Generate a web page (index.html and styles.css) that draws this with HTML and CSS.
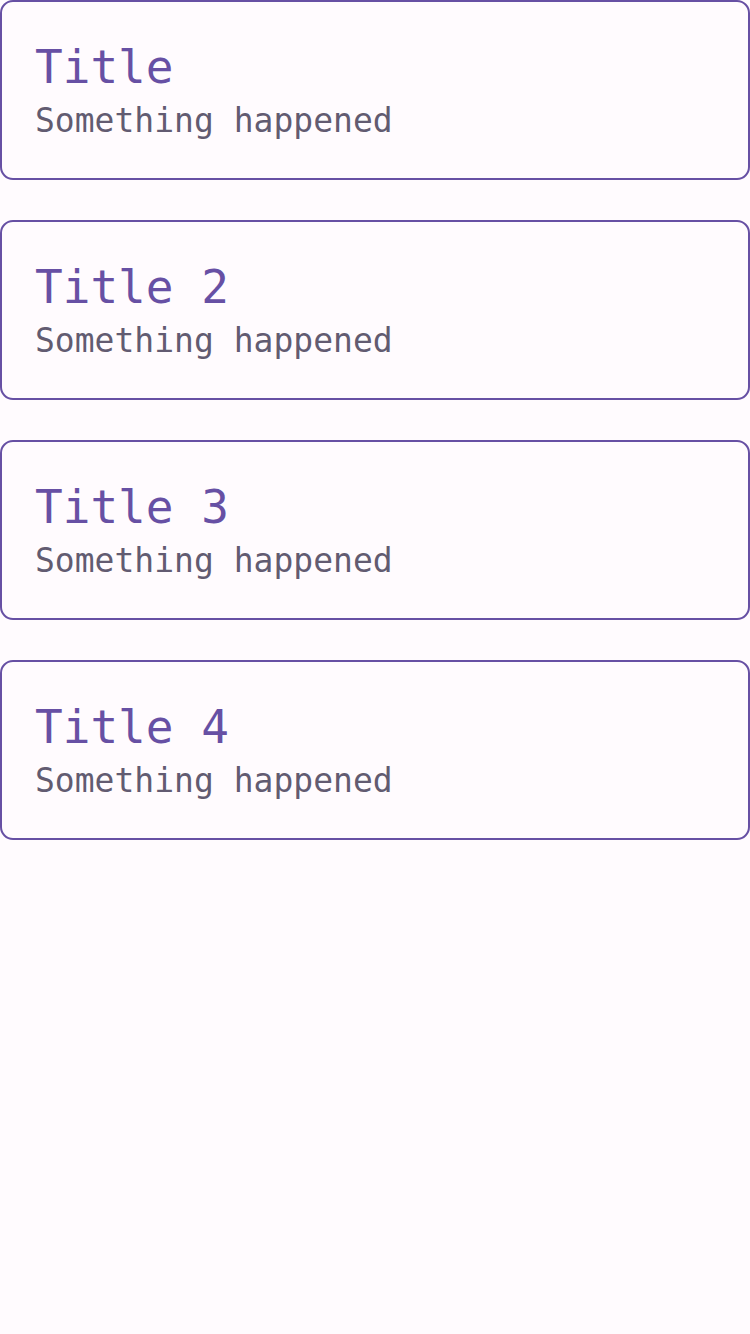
FILE: index.html
```html
<!DOCTYPE html>
<html>
<head>
<meta charset="utf-8">
<link rel="stylesheet" href="styles.css">
</head>
<body>
<div class="list">
  <div class="card"><div class="title">Title</div><div class="sub">Something happened</div></div>
  <div class="card"><div class="title">Title 2</div><div class="sub">Something happened</div></div>
  <div class="card"><div class="title">Title 3</div><div class="sub">Something happened</div></div>
  <div class="card"><div class="title">Title 4</div><div class="sub">Something happened</div></div>
</div>
</body>
</html>
```
FILE: styles.css
```css
html, body {
  margin: 0;
  padding: 0;
  background: #fffbfe;
  width: 750px;
  height: 1334px;
}
.list {
  display: flex;
  flex-direction: column;
  gap: 40px;
}
.card {
  border: 2px solid #6750a4;
  border-radius: 13px;
  padding: 34px 33px;
  font-family: "DejaVu Sans Mono", "Liberation Mono", monospace;
}
.title {
  font-size: 46px;
  line-height: 62px;
  color: #6750a4;
}
.sub {
  font-size: 33px;
  line-height: 46px;
  color: #625b71;
}
```
